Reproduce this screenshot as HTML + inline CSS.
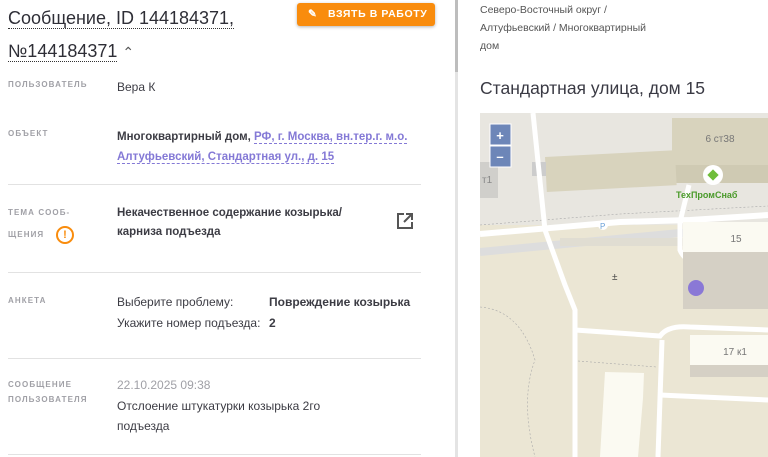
<!DOCTYPE html>
<html><head><meta charset="utf-8"><style>
*{margin:0;padding:0;box-sizing:border-box}
body{width:768px;height:457px;overflow:hidden;background:#fff;font-family:"Liberation Sans",sans-serif;color:#3c3c44;position:relative}
.abs{position:absolute}
.lbl{position:absolute;left:8px;font-size:8px;letter-spacing:1.1px;color:#a0a0a6;font-weight:bold;line-height:20px}
.val{position:absolute;left:117px;font-size:12px;line-height:20px}
.hr{position:absolute;left:8px;width:413px;height:1px;background:#e2e2e2}
.b{font-weight:bold}
</style></head><body>
<div class="abs" style="left:8px;top:2px;font-size:18px;line-height:33px;color:#2e2e36;width:280px">
<span style="border-bottom:1.5px dotted #333">Сообщение, ID 144184371,</span><br><span style="border-bottom:1.5px dotted #333">№144184371</span> <span style="font-size:14px;color:#555">&#8963;</span></div>
<div class="abs" style="left:297px;top:3px;width:138px;height:23px;background:#f98c0d;border-radius:3px;box-shadow:0 1px 3px rgba(0,0,0,.3);color:#fff;font-size:10.5px;font-weight:bold;letter-spacing:.6px;line-height:23px;padding-left:11px">✎&nbsp;&nbsp; ВЗЯТЬ В РАБОТУ</div>
<div class="lbl" style="top:75px">ПОЛЬЗОВАТЕЛЬ</div>
<div class="val" style="top:77px">Вера К</div>
<div class="lbl" style="top:124px">ОБЪЕКТ</div>
<div class="val b" style="top:127px;font-size:11.5px">Многоквартирный дом, <span style="color:#8479d6;border-bottom:1px dashed #8479d6">РФ, г. Москва, вн.тер.г. м.о.</span><br><span style="color:#8479d6;border-bottom:1px dashed #8479d6">Алтуфьевский, Стандартная ул., д. 15</span></div>
<div class="hr" style="top:184px"></div>
<div class="lbl" style="top:203px">ТЕМА СООБ-</div>
<div class="lbl" style="top:225px">ЩЕНИЯ</div>
<div class="abs" style="left:56px;top:226px;width:18px;height:18px;border:2px solid #f98c0d;border-radius:50%;color:#f98c0d;font-size:11px;font-weight:bold;text-align:center;line-height:14px">!</div>
<div class="val b" style="top:204px;font-size:11.5px;line-height:19px">Некачественное содержание козырька/<br>карниза подъезда</div>
<svg class="abs" style="left:396px;top:212px" width="18" height="18" viewBox="0 0 18 18"><path d="M8 2H2v14h14v-6" fill="none" stroke="#555" stroke-width="2"/><path d="M10 2h6v6M16 2L8 10" fill="none" stroke="#555" stroke-width="2"/></svg>
<div class="hr" style="top:272px"></div>
<div class="lbl" style="top:291px">АНКЕТА</div>
<div class="val" style="top:292px">Выберите проблему:</div>
<div class="val" style="top:313px">Укажите номер подъезда:</div>
<div class="val b" style="left:269px;top:292px">Повреждение козырька</div>
<div class="val b" style="left:269px;top:313px">2</div>
<div class="hr" style="top:358px"></div>
<div class="lbl" style="top:377px;line-height:15px">СООБЩЕНИЕ<br>ПОЛЬЗОВАТЕЛЯ</div>
<div class="val" style="top:377px;color:#a0a0a6;line-height:16px">22.10.2025 09:38</div>
<div class="val" style="top:396px">Отслоение штукатурки козырька 2го<br>подъезда</div>
<div class="hr" style="top:454px"></div>
<div class="abs" style="left:455px;top:0;width:3px;height:457px;background:#e4e4e4"></div>
<div class="abs" style="left:455px;top:0;width:3px;height:72px;background:#bdbdbd"></div>
<div class="abs" style="left:480px;top:1px;font-size:10.5px;line-height:18px;color:#555">Северо-Восточный округ /<br>Алтуфьевский / Многоквартирный<br>дом</div>
<div class="abs" style="left:480px;top:78px;font-size:17.5px;color:#3a3a44">Стандартная улица, дом 15</div>
<svg class="abs" style="left:480px;top:113px" width="288" height="344" viewBox="480 113 288 344">
<rect x="480" y="113" width="288" height="344" fill="#ebe6d4"/>
<rect x="480" y="113" width="288" height="112" fill="#e8e6e0"/>
<path d="M480 252 L680 233 L768 235" stroke="#ddd" stroke-width="8" fill="none"/>
<rect x="560" y="238" width="140" height="8" fill="#e0ddd2"/>
<rect x="672" y="118" width="96" height="62" fill="#d8d3bd"/>
<rect x="672" y="165" width="96" height="18" fill="#cfcab3"/>
<text x="720" y="142" font-size="10" fill="#777" text-anchor="middle" font-family="Liberation Sans">6 ст38</text>
<rect x="545" y="157" width="130" height="35" fill="#d8d3bd" transform="rotate(-3 545 157)"/>
<rect x="532" y="162" width="14" height="14" fill="#ccc"/>
<rect x="480" y="162" width="18" height="36" fill="#d0cfcb"/>
<text x="482" y="183" font-size="10" fill="#888" font-family="Liberation Sans">т1</text>
<path d="M480 225 L620 214 L768 206" stroke="#aaa" stroke-width="0.6" stroke-dasharray="2,2" fill="none"/>
<path d="M480 234 L620 222 L690 220 L768 215" stroke="#fff" stroke-width="6" fill="none"/>
<path d="M533 113 L545 230 L565 285 L575 310 L575 457" stroke="#fff" stroke-width="5" fill="none"/>
<path d="M689 185 L680 222 L680 250 Q685 262 700 263" stroke="#fff" stroke-width="5" fill="none"/>
<path d="M575 330 L660 336 Q668 325 690 327 L768 330" stroke="#fff" stroke-width="5" fill="none"/>
<path d="M662 340 L658 457" stroke="#fff" stroke-width="5" fill="none"/>
<path d="M660 395 L768 400" stroke="#fff" stroke-width="5" fill="none"/>
<rect x="683" y="222" width="85" height="30" fill="#fbfaf2"/>
<text x="736" y="242" font-size="10" fill="#777" text-anchor="middle" font-family="Liberation Sans">15</text>
<rect x="683" y="252" width="85" height="57" fill="#d5d0c5"/>
<circle cx="696" cy="288" r="8" fill="#8a78d6"/>
<rect x="690" y="335" width="78" height="32" fill="#fbfaf2"/>
<rect x="690" y="365" width="78" height="12" fill="#d5d0c5"/>
<text x="735" y="355" font-size="10" fill="#777" text-anchor="middle" font-family="Liberation Sans">17 к1</text>
<path d="M605 372 L644 373 L643 398 L638 457 L600 457 Z" fill="#fbfaf2"/>
<path d="M578 361 L657 367" stroke="#aaa" stroke-width="0.6" stroke-dasharray="2,2"/>
<path d="M480 307 Q520 310 535 360 Q520 400 535 457" stroke="#aaa" stroke-width="0.6" stroke-dasharray="2,2" fill="none"/>
<text x="612" y="280" font-size="10" fill="#444" font-family="Liberation Sans">±</text>
<circle cx="603" cy="225" r="5" fill="#fff"/><text x="600" y="229" font-size="8" fill="#6aa0d8" font-family="Liberation Sans">P</text>
<circle cx="713" cy="175" r="10" fill="#fff"/><rect x="709" y="171" width="8" height="8" fill="#6fbd3a" transform="rotate(45 713 175)"/>
<text x="676" y="198" font-size="9" fill="#4a9a2a" font-weight="bold" font-family="Liberation Sans">ТехПромСнаб</text>
<rect x="490" y="124" width="21" height="21" fill="#6d86b8" stroke="#fff"/><rect x="490" y="146" width="21" height="21" fill="#6d86b8" stroke="#fff"/>
<text x="500" y="140" font-size="13" fill="#fff" text-anchor="middle" font-weight="bold" font-family="Liberation Sans">+</text>
<text x="500" y="161" font-size="13" fill="#fff" text-anchor="middle" font-weight="bold" font-family="Liberation Sans">–</text>
</svg>
</body></html>
